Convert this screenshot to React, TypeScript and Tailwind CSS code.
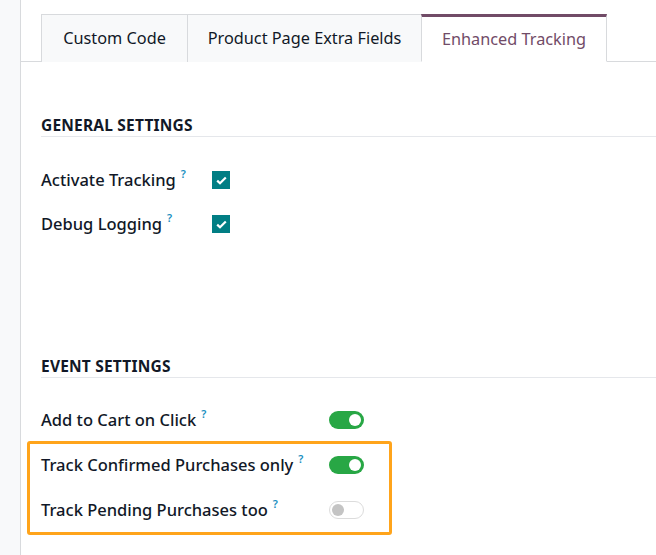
import React from "react";

const font = { fontFamily: '"Noto Sans", "Open Sans", sans-serif' };

const tabs = [
  { name: "Custom Code", width: "w-[146px]", active: false },
  { name: "Product Page Extra Fields", width: "w-[234px]", active: false },
  { name: "Enhanced Tracking", width: "w-[186px]", active: true },
];

const Help = () => (
  <span className="relative -top-[8px] ml-[5px] text-[11px] font-semibold text-[#1a8fbf]">?</span>
);

const Check = () => (
  <span className="flex h-[18px] w-[18px] items-center justify-center bg-[#017e84]">
    <svg width="11" height="9" viewBox="0 0 11 9">
      <path d="M1.2 4.6 L4 7.3 L9.8 1.5" stroke="#fff" strokeWidth="2.2" fill="none" />
    </svg>
  </span>
);

const Toggle = ({ on }: { on: boolean }) =>
  on ? (
    <span className="flex h-[18px] w-[35px] items-center justify-end rounded-full bg-[#28a745] pr-[3px]">
      <span className="h-[12px] w-[12px] rounded-full bg-white" />
    </span>
  ) : (
    <span className="flex h-[18px] w-[35px] items-center justify-start rounded-full border border-[#dcdcdc] bg-white pl-[2px]">
      <span className="h-[12px] w-[12px] rounded-full bg-[#c4c4c4]" />
    </span>
  );

const SectionTitle = ({ title }: { title: string }) => (
  <div className="border-b border-[#e5e7eb] text-[15.5px] font-bold uppercase leading-[22px] tracking-[0.2px] text-[#111827]">
    {title}
  </div>
);

export default function App() {
  return (
    <div style={font} className="flex h-[555px] w-[656px] overflow-hidden bg-white">
      <div className="w-[21px] shrink-0 border-r border-[#d8dadd] bg-[#f8f9fa]" />
      <div className="flex-1">
        {/* Tabs */}
        <div className="flex border-b border-[#d8dadd] pl-[20px] pt-[14px]">
          {tabs.map((t) => (
            <div
              key={t.name}
              className={`${t.width} -mb-px flex h-[48px] items-center justify-center text-[16.3px] ${
                t.active
                  ? "border-x border-t-[3px] border-x-[#d8dadd] border-t-[#714b67] border-b border-b-white bg-white text-[#714b67]"
                  : "border-l border-t border-[#d8dadd] bg-[#f8f9fa] text-[#111827]"
              }`}
            >
              {t.name}
            </div>
          ))}
        </div>

        <div className="pl-[20px]">
          {/* General settings */}
          <div className="pt-[52px]">
            <SectionTitle title="General Settings" />
          </div>
          <div className="mt-[34px] flex flex-col gap-[26px] text-[16.5px] font-medium text-[#111827]">
            {["Activate Tracking", "Debug Logging"].map((l) => (
              <div key={l} className="flex h-[18px] items-center">
                <div className="w-[171px] leading-none">
                  {l}
                  <Help />
                </div>
                <Check />
              </div>
            ))}
          </div>

          {/* Event settings */}
          <div className="pt-[122px]">
            <SectionTitle title="Event Settings" />
          </div>
          <div className="mt-[33px] flex h-[18px] items-center text-[16.5px] font-medium text-[#111827]">
            <div className="w-[288px] leading-none">
              Add to Cart on Click
              <Help />
            </div>
            <Toggle on />
          </div>
          <div className="-ml-[14px] mt-[12px] w-[365px] rounded-[3px] border-[3px] border-[#ffa41b] pb-[13px] pl-[11px] pt-[12px] text-[16.5px] font-medium text-[#111827]">
            <div className="flex h-[18px] items-center">
              <div className="w-[288px] leading-none">
                Track Confirmed Purchases only
                <Help />
              </div>
              <Toggle on />
            </div>
            <div className="mt-[27px] flex h-[18px] items-center">
              <div className="w-[288px] leading-none">
                Track Pending Purchases too
                <Help />
              </div>
              <Toggle on={false} />
            </div>
          </div>
        </div>
      </div>
    </div>
  );
}
